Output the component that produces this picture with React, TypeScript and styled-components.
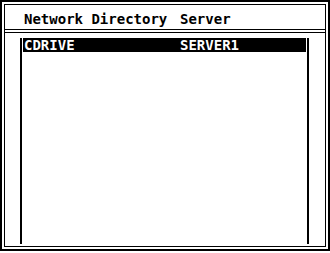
import React from 'react';
import styled, { createGlobalStyle } from 'styled-components';

const GlobalStyle = createGlobalStyle`
  html, body {
    margin: 0;
    padding: 0;
    background: #ffffff;
  }
  * {
    box-sizing: border-box;
  }
`;

const Frame = styled.div`
  width: 330px;
  height: 251px;
  border: 2px solid #000;
  padding: 2px;
  background: #fff;
  font-family: "DejaVu Sans Mono", "Liberation Mono", monospace;
  font-weight: bold;
  font-size: 14px;
  line-height: 14px;
`;

const Inner = styled.div`
  height: 100%;
  border: 1px solid #000;
  display: flex;
  flex-direction: column;
`;

const Columns = styled.div`
  display: grid;
  grid-template-columns: 156px 1fr;
  white-space: pre;
`;

const Header = styled(Columns)`
  height: 25px;
  padding: 7px 0 0 19px;
  border-bottom: 1px solid #000;
  color: #000;
`;

const ListArea = styled.div`
  flex: 1;
  margin-top: 2px;
  border-top: 1px solid #000;
  padding: 5px 0 2px 15px;
  display: flex;
`;

const ListBox = styled.div`
  width: 289px;
  border-left: 2px solid #000;
  border-right: 2px solid #000;
  padding: 0 1px;
`;

const Row = styled(Columns)<{ $selected?: boolean }>`
  height: 14px;
  padding-left: 1px;
  background: ${p => (p.$selected ? '#000' : 'transparent')};
  color: ${p => (p.$selected ? '#fff' : '#000')};
`;

const entries = [{ directory: 'CDRIVE', server: 'SERVER1' }];

export default function App() {
  return (
    <>
      <GlobalStyle />
      <Frame>
        <Inner>
          <Header>
            <span>Network Directory</span>
            <span>Server</span>
          </Header>
          <ListArea>
            <ListBox>
              {entries.map((e, i) => (
                <Row key={e.directory} $selected={i === 0}>
                  <span>{e.directory}</span>
                  <span>{e.server}</span>
                </Row>
              ))}
            </ListBox>
          </ListArea>
        </Inner>
      </Frame>
    </>
  );
}
